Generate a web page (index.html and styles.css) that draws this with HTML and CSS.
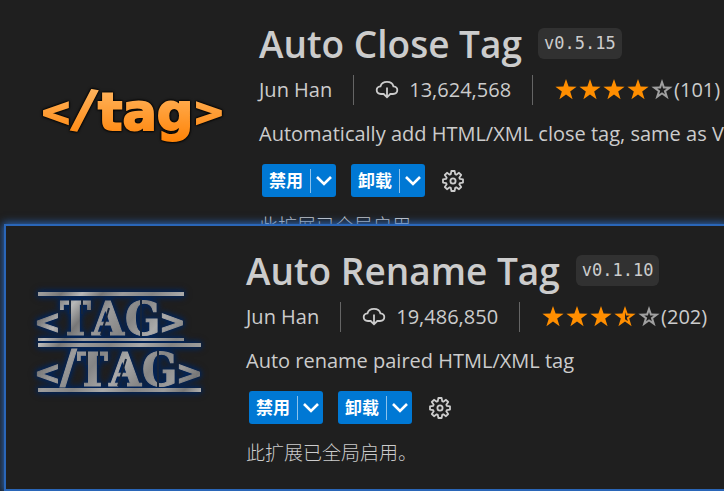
FILE: index.html
```
<!DOCTYPE html>
<html lang="zh-CN">
<head>
<meta charset="UTF-8">
<meta name="viewport" content="width=device-width, initial-scale=1.0">
<title>Extensions</title>
<link rel="stylesheet" href="styles.css">
</head>
<body>

<!-- shared icons -->
<svg class="sprite" aria-hidden="true">
    <symbol id="star-full" viewBox="0 0 24 24">
        <path d="M12 1 14.600 8.600 22.600 8.700 16.200 13.500 18.600 21.200 12 16.600 5.400 21.200 7.800 13.500 1.400 8.700 9.400 8.600Z"/>
    </symbol>
    <symbol id="star-empty" viewBox="0 0 24 24">
        <path fill-rule="evenodd" d="M12 1 14.600 8.600 22.600 8.700 16.200 13.500 18.600 21.200 12 16.600 5.400 21.200 7.800 13.500 1.400 8.700 9.400 8.600ZM12 7 10.900 10.600H7.200L10.200 12.800 9.100 16.300 12 14.200 14.900 16.300 13.800 12.800 16.800 10.600H13.100Z"/>
    </symbol>
    <symbol id="star-half" viewBox="0 0 24 24">
        <path fill-rule="evenodd" d="M12 1 14.600 8.600 22.600 8.700 16.200 13.500 18.600 21.200 12 16.600 5.400 21.200 7.800 13.500 1.400 8.700 9.400 8.600ZM12 7V14.200L14.900 16.300 13.800 12.800 16.800 10.600H13.100Z"/>
    </symbol>
    <symbol id="cloud" viewBox="0 0 24 20">
        <g fill="none" stroke="currentColor" stroke-width="1.800">
            <path d="M9.200 14H6C3.500 14 1.700 12.400 1.700 10.100 1.700 7.900 3.300 6.500 5.500 6.300 6.300 3.500 8.800 1.900 12 1.900S17.700 3.500 18.400 6.300C20.700 6.500 22.300 7.900 22.300 10.100 22.300 12.400 20.500 14 18 14H14.800"/>
            <path d="M12 7.500V17M8.700 14 12 17.300 15.300 14"/>
        </g>
    </symbol>
    <symbol id="chevron" viewBox="0 0 18 12">
        <path d="M2 2 9 9 16 2" fill="none" stroke="currentColor" stroke-width="2.600"/>
    </symbol>
    <symbol id="gear" viewBox="0 0 24 24">
        <g fill="none" stroke="currentColor" stroke-width="1.800" stroke-linejoin="round">
            <path d="M10.400 2H13.600L14.200 5.200 15.300 5.700 18 3.800 20.200 6 18.300 8.700 18.800 9.800 22 10.400V13.600L18.800 14.200 18.300 15.300 20.200 18 18 20.200 15.300 18.300 14.200 18.800 13.600 22H10.400L9.800 18.800 8.700 18.300 6 20.200 3.800 18 5.700 15.300 5.200 14.200 2 13.600V10.400L5.200 9.800 5.700 8.700 3.800 6 6 3.800 8.700 5.700 9.800 5.200Z"/>
            <circle cx="12" cy="12" r="2.600"/>
        </g>
    </symbol>
</svg>

<section class="card">
    <svg class="logo" viewBox="0 0 192 192" role="img" aria-label="Auto Close Tag">
        <defs>
            <linearGradient id="orange" gradientUnits="userSpaceOnUse" x1="0" y1="68" x2="0" y2="120">
                <stop offset="0" stop-color="#ffb35c"/>
                <stop offset="1" stop-color="#ff8408"/>
            </linearGradient>
        </defs>
        <g class="logo-close" fill="url(#orange)" stroke="url(#orange)">
            <text x="9" y="104" font-size="38">&lt;</text>
            <text x="41" y="104" font-size="52" rotate="10">/</text>
            <text x="67" y="109" font-size="51">tag</text>
            <text x="162" y="104" font-size="38">&gt;</text>
        </g>
    </svg>
    <div class="details">
        <div class="title">
            <h1>Auto Close Tag</h1>
            <code class="version">v0.5.15</code>
        </div>
        <div class="meta">
            <span class="publisher">Jun Han</span>
            <span class="installs"><svg class="cloud"><use href="#cloud"/></svg>13,624,568</span>
            <span class="rating">
                <svg class="star"><use href="#star-full"/></svg>
                <svg class="star"><use href="#star-full"/></svg>
                <svg class="star"><use href="#star-full"/></svg>
                <svg class="star"><use href="#star-full"/></svg>
                <svg class="star empty"><use href="#star-empty"/></svg>
                <span>(101)</span>
            </span>
        </div>
        <p class="description">Automatically add HTML/XML close tag, same as Visual Studio IDE</p>
        <div class="actions">
            <div class="split">
                <button class="main">禁用</button>
                <button class="drop" aria-label="禁用选项"><svg><use href="#chevron"/></svg></button>
            </div>
            <div class="split">
                <button class="main">卸载</button>
                <button class="drop" aria-label="卸载选项"><svg><use href="#chevron"/></svg></button>
            </div>
            <button class="manage" aria-label="管理"><svg><use href="#gear"/></svg></button>
        </div>
        <p class="status">此扩展已全局启用。</p>
    </div>
</section>

<section class="card active">
    <svg class="logo" viewBox="0 0 192 192" role="img" aria-label="Auto Rename Tag">
        <defs>
            <linearGradient id="steel" gradientUnits="userSpaceOnUse" x1="0" y1="0" x2="60" y2="50" spreadMethod="reflect">
                <stop offset="0" stop-color="#aaa"/>
                <stop offset="0.300" stop-color="#858585"/>
                <stop offset="0.600" stop-color="#9c9c9c"/>
                <stop offset="0.800" stop-color="#777"/>
                <stop offset="1" stop-color="#b8b8b8"/>
            </linearGradient>
        </defs>
        <g class="logo-rename" fill="url(#steel)" stroke="url(#steel)">
            <path stroke="none" d="M20 44H166V48H20ZM20 90H166V93H20ZM20 95H183V99H20ZM20 140H183V144H20Z"/>
            <text class="bracket" x="16" y="85" font-size="32">&lt;</text>
            <text x="42 74 107" y="87" font-size="46">TAG</text>
            <text class="bracket" x="141" y="85" font-size="32">&gt;</text>
            <text class="bracket" x="16" y="136" font-size="32">&lt;</text>
            <text class="bracket" x="42" y="135" font-size="46">/</text>
            <text x="59 91 124" y="138" font-size="46">TAG</text>
            <text class="bracket" x="158" y="136" font-size="32">&gt;</text>
            <!-- stencil gaps -->
            <path class="gap" d="M52 51V66M64 51V66M83 87 91 60M123 51V89M69 102V117M81 102V117M100 138 108 111M140 102V139"/>
        </g>
    </svg>
    <div class="details">
        <div class="title">
            <h1>Auto Rename Tag</h1>
            <code class="version">v0.1.10</code>
        </div>
        <div class="meta">
            <span class="publisher">Jun Han</span>
            <span class="installs"><svg class="cloud"><use href="#cloud"/></svg>19,486,850</span>
            <span class="rating">
                <svg class="star"><use href="#star-full"/></svg>
                <svg class="star"><use href="#star-full"/></svg>
                <svg class="star"><use href="#star-full"/></svg>
                <svg class="star"><use href="#star-half"/></svg>
                <svg class="star empty"><use href="#star-empty"/></svg>
                <span>(202)</span>
            </span>
        </div>
        <p class="description">Auto rename paired HTML/XML tag</p>
        <div class="actions">
            <div class="split">
                <button class="main">禁用</button>
                <button class="drop" aria-label="禁用选项"><svg><use href="#chevron"/></svg></button>
            </div>
            <div class="split">
                <button class="main">卸载</button>
                <button class="drop" aria-label="卸载选项"><svg><use href="#chevron"/></svg></button>
            </div>
            <button class="manage" aria-label="管理"><svg><use href="#gear"/></svg></button>
        </div>
        <p class="status">此扩展已全局启用。</p>
    </div>
</section>

</body>
</html>
```
FILE: styles.css
```
:root {
    --bg: #1f1f1f;
    --text: #cccccc;
    --button: #0078d4;
    --star: #ff8e00;
    --glow: #2a66b8;
}
* {
    box-sizing: border-box;
}
body {
    margin: 0;
    background: var(--bg);
    color: var(--text);
    font-family: "Open Sans", "Noto Sans", "Noto Sans CJK SC", sans-serif;
    font-size: 20px;
    line-height: 28px;
    overflow: hidden;
}
h1, p {
    margin: 0;
}
.sprite {
    display: none;
}
.card {
    display: flex;
    gap: 36px;
    padding: 21px 0 0 31px;
    background: var(--bg);
    white-space: nowrap;
}
/* sits over the bottom of the card before it */
.active {
    position: relative;
    margin: -13px 0 2px 6px;
    padding: 22px 0 23px 12px;
    box-shadow: 0 0 0 2px var(--glow), 0 0 8px 3px var(--glow);
}
.logo {
    flex: none;
    width: 192px;
    height: 192px;
    overflow: visible;
}
.logo-close {
    font-family: "DejaVu Sans", sans-serif;
    font-weight: bold;
    stroke-width: 2px;
    filter: drop-shadow(0 0 1px #000) drop-shadow(0 0 1px #000);
}
.logo-rename {
    font-family: "DejaVu Serif Condensed", "DejaVu Serif", serif;
    font-weight: bold;
    stroke-width: 1px;
    filter: drop-shadow(0 0 3px #00245a) drop-shadow(0 0 2px #00245a);
}
.logo-rename .bracket {
    font-family: "DejaVu Sans", sans-serif;
}
.logo-rename .gap {
    fill: none;
    stroke: #14243c;
    stroke-width: 2px;
}
.title {
    display: flex;
    align-items: center;
    gap: 16px;
    height: 48px;
    padding-bottom: 3px;
    margin-bottom: 6px;
}
h1 {
    font-size: 37px;
    font-weight: 600;
    line-height: 44px;
}
.version {
    padding: 0 6px;
    border-radius: 6px;
    background: #313131;
    font-family: "DejaVu Sans Mono", monospace;
    font-size: 17px;
    line-height: 31px;
}
.meta {
    display: flex;
    line-height: 30px;
    margin-bottom: 15px;
}
.meta > span {
    display: flex;
    align-items: center;
}
.meta > span + span {
    margin-left: 21px;
    padding-left: 21px;
    border-left: 1px solid #656565;
}
.cloud {
    width: 24px;
    height: 20px;
    margin-right: 10px;
}
.star {
    width: 24px;
    height: 24px;
    fill: var(--star);
}
.star.empty {
    fill: #a0a0a0;
}
.actions {
    display: flex;
    align-items: center;
    margin: 16px 0 14px 3px;
}
.split {
    display: flex;
    align-items: center;
    height: 33px;
    margin-right: 15px;
    border-radius: 3px;
    background: var(--button);
}
button {
    padding: 0;
    border: 0;
    background: none;
    color: #fff;
    font: inherit;
    cursor: pointer;
}
.main {
    padding: 0 7px;
    font-size: 17px;
    font-weight: bold;
}
.drop {
    display: flex;
    align-items: center;
    justify-content: center;
    width: 26px;
    height: 24px;
    border-left: 1px solid #8cc2ec;
}
.drop svg {
    width: 18px;
    height: 12px;
}
.manage {
    display: flex;
    margin-left: 1px;
    color: var(--text);
}
.manage svg {
    width: 24px;
    height: 24px;
}
.status {
    font-family: "Noto Sans CJK SC", sans-serif;
    font-size: 19px;
    font-weight: 300;
}
```
